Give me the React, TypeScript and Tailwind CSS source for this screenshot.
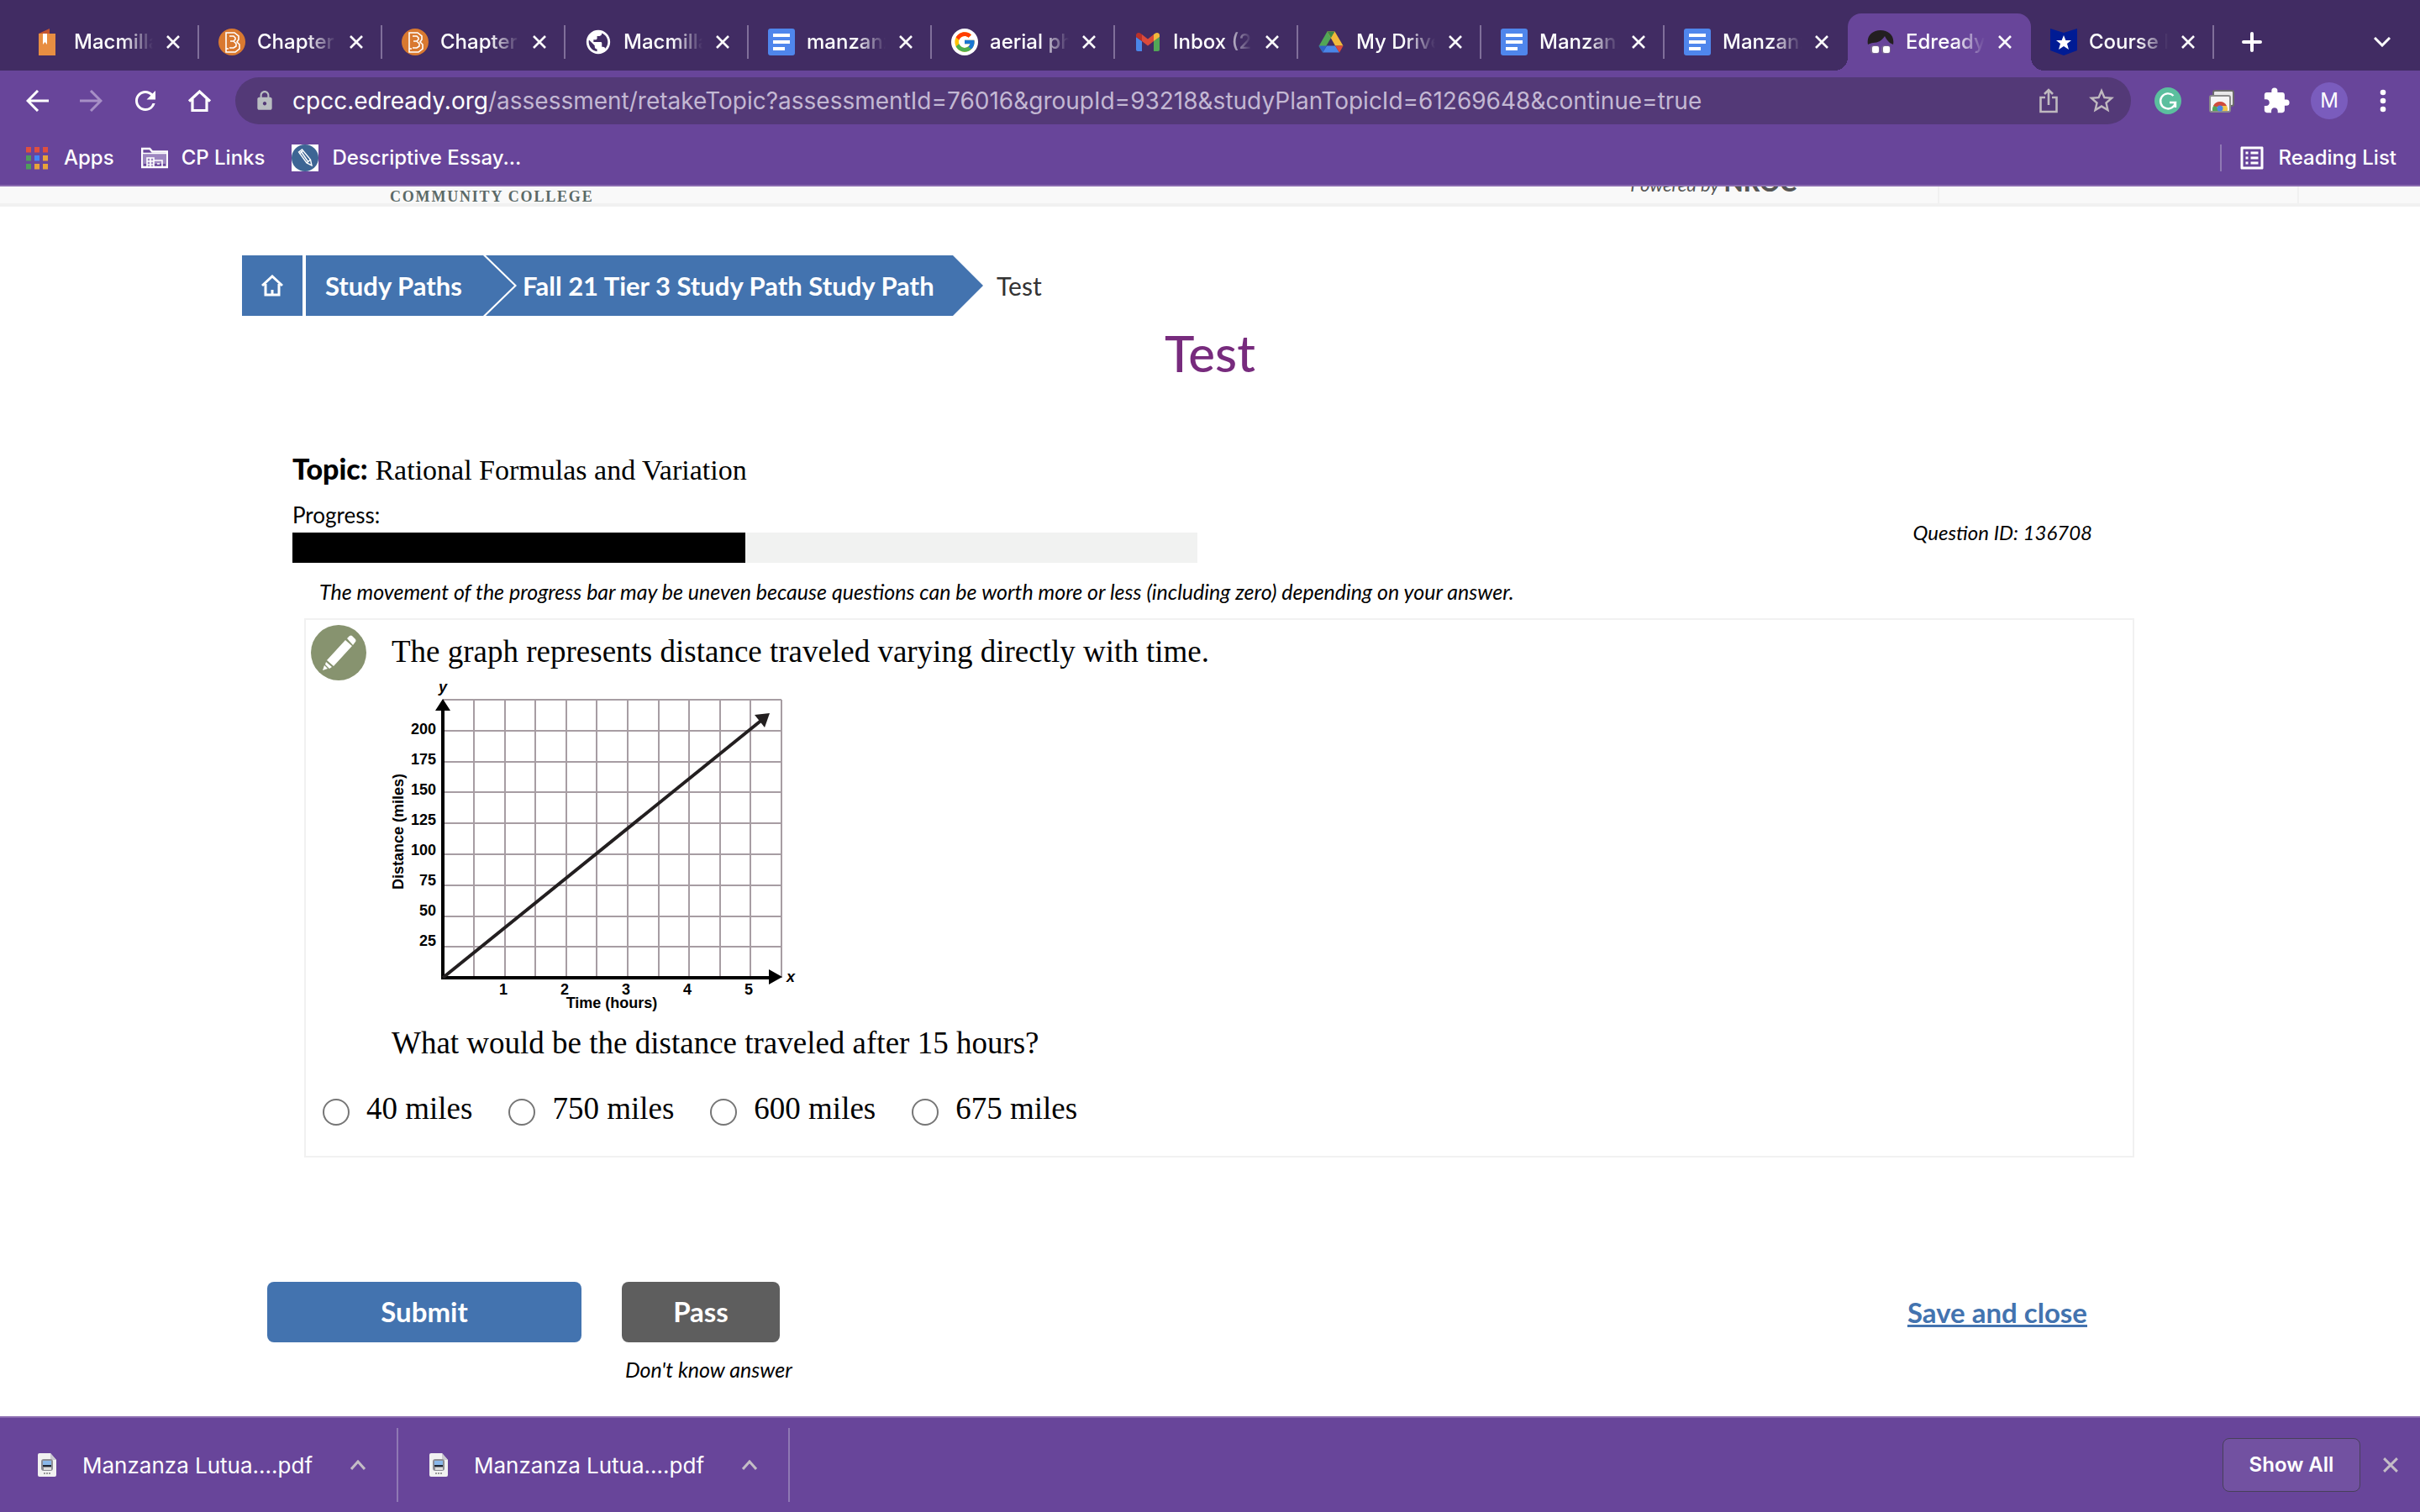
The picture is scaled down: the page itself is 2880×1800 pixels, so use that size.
import type { ReactNode } from 'react';
import { FcGoogle } from 'react-icons/fc';
import { MdExtension, MdListAlt, MdLock, MdPublic, MdRefresh, MdStarBorder } from 'react-icons/md';

function BookIcon() {
  return (
    <svg viewBox="0 0 32 32" className="size-8 shrink-0">
      <path d="M4 6 17 0v6z" fill="#c4552f" />
      <path d="M4 6h20v26H4z" fill="#e88e42" />
      <path d="M9 6h5v13l-2.500-3L9 19z" fill="#fff" />
    </svg>
  );
}

function BartlebyIcon() {
  return (
    <svg viewBox="0 0 32 32" className="size-8 shrink-0" fill="none" stroke="#fff" strokeWidth="1.600">
      <circle cx="16" cy="16" r="16" fill="#d97930" stroke="none" />
      <path d="M9 5h10l5 4v4l-2 3 3 3v5l-5 4H9z" />
      <path d="M13 9h5l2 2v2l-2 2h-4m4 0 3 3v3l-3 2h-5M9 24h3" />
    </svg>
  );
}

function DocsIcon() {
  return (
    <svg viewBox="0 0 32 32" className="size-8 shrink-0">
      <rect width="32" height="32" rx="3" fill="#4f86ec" />
      <path d="M6 6h20v4H6zM6 14h20v4H6zM6 22h14v4H6z" fill="#fff" />
    </svg>
  );
}

function GoogleIcon() {
  return (
    <span className="flex size-8 shrink-0 items-center justify-center rounded-full bg-white">
      <FcGoogle size={28} />
    </span>
  );
}

function GmailIcon() {
  return (
    <svg viewBox="0 0 32 32" className="size-8 shrink-0">
      <path d="M2 10v15c0 1.200.8 2 2 2h5V15z" fill="#4a86e8" />
      <path d="M23 15v12h5c1.200 0 2-.8 2-2V10z" fill="#52a657" />
      <path d="M23 7v8l7-5V8c0-2.600-2.800-4-5-2.500z" fill="#f1b93b" />
      <path d="M9 7v8l7 5.500 7-5.500V7l-7 5.500z" fill="#db4a3b" />
      <path d="M2 8v2l7 5V7L7 5.500C4.800 4 2 5.400 2 8z" fill="#b8312a" />
    </svg>
  );
}

function DriveIcon() {
  return (
    <svg viewBox="0 0 32 32" className="size-8 shrink-0">
      <path d="M11.500 3.500 1.500 21l4.500 7L16 11z" fill="#52a657" />
      <path d="M20.500 3.500h-9L21 20.500h9.500z" fill="#f1b93b" />
      <path d="M11.500 3.500h9L16 11z" fill="#3c8a45" />
      <path d="M11 20.500h10L26 28.500H6z" fill="#4a86e8" />
      <path d="M1.500 20.500H11L6 28.500z" fill="#2f62c9" />
      <path d="M21 20.500h9.500L26 28.500z" fill="#db4a3b" />
    </svg>
  );
}

function EdreadyIcon() {
  return (
    <svg viewBox="0 0 32 32" className="size-8 shrink-0">
      <path d="M1 19C-1 9 6 2 16 2s17 7 15 17l-4-2c-2-2-4-4-6-8-3 5-8 8-14 8-2 0-4 1-6 2z" fill="#231f20" />
      <rect x="4" y="20" width="11" height="10" rx="4" fill="#77658f" />
      <rect x="17" y="20" width="11" height="10" rx="4" fill="#77658f" />
      <rect x="6" y="21" width="8" height="8" rx="2" fill="#fff" />
      <rect x="19" y="21" width="8" height="8" rx="2" fill="#fff" />
    </svg>
  );
}

function CourseIcon() {
  return (
    <svg viewBox="0 0 32 32" className="size-8 shrink-0">
      <path d="m0 0 16 5L32 0v26l-16 6L0 26z" fill="#001b94" />
      <path d="m16 8 2.400 6H25l-5 4 2 7-6-4-6 4 2-7-5-4h6.600z" fill="#fff" />
    </svg>
  );
}

function CloseIcon({ className }: { className: string }) {
  return (
    <svg viewBox="0 0 16 16" className={className} fill="none" stroke="currentColor" strokeWidth="2.600">
      <path d="m1 1 14 14M15 1 1 15" />
    </svg>
  );
}

function PdfIcon() {
  return (
    <svg viewBox="0 0 22 28" className="h-7 w-[22px] shrink-0">
      <path d="M2 0h13l7 8v18a2 2 0 0 1-2 2H2a2 2 0 0 1-2-2V2a2 2 0 0 1 2-2z" fill="#f1f1f1" />
      <path d="M15 0v8h7z" fill="#c9c9cf" />
      <rect x="4" y="7" width="14" height="14" rx="3" fill="#8d8d95" />
      <path d="M6 9h10v5H6z" fill="#8ab8ea" />
      <path d="M6 14h10v2H6z" fill="#1f2733" />
      <path d="M7 17h9v3H7z" fill="#dcdcdc" />
      <path d="M7 24h8" stroke="#9a9a9a" strokeWidth="2" strokeDasharray="2 1" />
    </svg>
  );
}

type Tab = { title: string; icon: ReactNode; active?: boolean; noDivider?: boolean };

const tabs: Tab[] = [
  { title: 'Macmilla', icon: <BookIcon /> },
  { title: 'Chapter', icon: <BartlebyIcon /> },
  { title: 'Chapter', icon: <BartlebyIcon /> },
  { title: 'Macmilla', icon: <MdPublic size={34} className="-mx-px shrink-0" /> },
  { title: 'manzanz', icon: <DocsIcon /> },
  { title: 'aerial ph', icon: <GoogleIcon /> },
  { title: 'Inbox (2', icon: <GmailIcon /> },
  { title: 'My Drive', icon: <DriveIcon /> },
  { title: 'Manzanz', icon: <DocsIcon /> },
  { title: 'Manzanz', icon: <DocsIcon />, noDivider: true },
  { title: 'Edready', icon: <EdreadyIcon />, active: true, noDivider: true },
  { title: 'Course H', icon: <CourseIcon /> },
];

function TabStrip() {
  return (
    <div className="flex h-[84px] items-stretch bg-[#412c63] pl-[19px] pt-4 text-white">
      {tabs.map((tab, i) => (
        <div
          key={i}
          className={
            tab.active
              ? "relative flex w-[218px] items-center rounded-t-2xl bg-[#68459a] pl-[23px] before:absolute before:bottom-0 before:-left-4 before:size-4 before:bg-[radial-gradient(circle_at_0_0,transparent_16px,#68459a_16px)] before:content-[''] after:absolute after:bottom-0 after:-right-4 after:size-4 after:bg-[radial-gradient(circle_at_100%_0,transparent_16px,#68459a_16px)] after:content-['']"
              : 'flex w-[218px] items-center pl-[23px]'
          }
        >
          {tab.icon}
          <span className="ml-[14px] w-[94px] overflow-hidden whitespace-nowrap text-2xl font-medium [mask-image:linear-gradient(to_right,#000_62%,transparent)]">
            {tab.title}
          </span>
          <button aria-label="Close tab" className="ml-4">
            <CloseIcon className="size-4" />
          </button>
          {!tab.noDivider && <span className="ml-auto h-10 w-0.5 bg-[#806f9a]" />}
        </div>
      ))}
      <button aria-label="New tab" className="ml-[33px]">
        <svg viewBox="0 0 24 24" className="size-6" fill="none" stroke="currentColor" strokeWidth="4" strokeLinecap="round">
          <path d="M12 2v20M2 12h20" />
        </svg>
      </button>
      <button aria-label="Search tabs" className="ml-auto mr-[35px]">
        <svg viewBox="0 0 20 12" className="h-3 w-5" fill="none" stroke="currentColor" strokeWidth="3">
          <path d="m1 1 9 9 9-9" />
        </svg>
      </button>
    </div>
  );
}

function Toolbar() {
  return (
    <div className="flex h-[72px] items-center pl-[31px] pr-10 text-white">
      <div className="flex w-[249px] items-center gap-[37px]">
        <button aria-label="Back">
          <svg viewBox="0 0 27 26" className="h-[26px] w-[27px]" fill="none" stroke="currentColor" strokeWidth="3">
            <path d="M27 13H2M14 1 2 13l12 12" />
          </svg>
        </button>
        <button aria-label="Forward" className="text-[#a78fc6]">
          <svg viewBox="0 0 27 26" className="h-[26px] w-[27px]" fill="none" stroke="currentColor" strokeWidth="3">
            <path d="M0 13h25M13 1l12 12-12 12" />
          </svg>
        </button>
        <button aria-label="Reload" className="-mx-1">
          <MdRefresh size={36} />
        </button>
        <button aria-label="Home">
          <svg viewBox="0 0 27 26" className="h-[26px] w-[27px]" fill="none" stroke="currentColor" strokeWidth="3.200">
            <path d="M1 13.500 13.500 2 26 13.500M5 11v13.500h17V11" />
          </svg>
        </button>
      </div>
      <div className="flex h-14 flex-1 items-center rounded-full bg-[#533977] pl-[22px] pr-[17px]">
        <MdLock size={26} className="text-[#b9bdc1]" />
        <div role="textbox" aria-label="Address" className="ml-[20px] flex-1 whitespace-nowrap text-[28px] text-[#c3b8d3]">
          <span className="text-white">cpcc.edready.org</span>
          /assessment/retakeTopic?assessmentId=76016&amp;groupId=93218&amp;studyPlanTopicId=61269648&amp;continue=true
        </div>
        <button aria-label="Share" className="text-[#bfb9bf]">
          <svg viewBox="0 0 22 30" className="h-[30px] w-[22px]" fill="none" stroke="currentColor" strokeWidth="2.600">
            <path d="M7 11H1.500v17h19V11H15M11 20V2M6 7l5-5 5 5" />
          </svg>
        </button>
        <button aria-label="Bookmark this page" className="ml-[34px] text-[#bfb9bf]">
          <MdStarBorder size={36} />
        </button>
      </div>
      <div className="ml-7 flex items-center">
        <button aria-label="Grammarly" className="w-16">
          <svg viewBox="0 0 32 32" className="size-8" fill="none" stroke="#fff" strokeWidth="2.400">
            <circle cx="16" cy="16" r="16" fill="#5bbf9e" stroke="none" />
            <path d="M22.500 10A9 9 0 1 0 25 18h-7m7 0v6" />
          </svg>
        </button>
        <button aria-label="Screenshots" className="w-16">
          <svg viewBox="0 0 32 32" className="size-8">
            <rect x="6" y="4" width="24" height="18" rx="2" fill="#e8e8e8" stroke="#6b6b6b" strokeWidth="2" />
            <rect x="2" y="10" width="24" height="19" rx="2" fill="#f4f4f4" stroke="#8b8b8b" strokeWidth="2" />
            <path d="M5 28a9 9 0 0 1 3-8l6 8z" fill="#52a657" />
            <path d="M6 22a9 9 0 0 1 16 0l-8 2z" fill="#cf4b3c" />
            <path d="M14 22h8a9 9 0 0 1 1 6h-9z" fill="#f1c84b" />
            <circle cx="14" cy="25" r="3.500" fill="#4a86e8" />
          </svg>
        </button>
        <button aria-label="Extensions" className="w-[58px]">
          <MdExtension size={34} />
        </button>
        <button aria-label="Profile" className="size-11 rounded-full bg-[#7a5cbd] text-2xl">
          M
        </button>
        <button aria-label="Menu" className="ml-[38px]">
          <svg viewBox="0 0 8 28" className="h-7 w-2" fill="currentColor">
            <circle cx="4" cy="4" r="3.300" />
            <circle cx="4" cy="14" r="3.300" />
            <circle cx="4" cy="24" r="3.300" />
          </svg>
        </button>
      </div>
    </div>
  );
}

const appDots = ['#e04f3f', '#e04f3f', '#e04f3f', '#4f9d5b', '#4285f4', '#e8a33a', '#4f9d5b', '#e8a33a', '#e8a33a'];

function BookmarksBar() {
  return (
    <nav className="flex h-[66px] items-center border-b-2 border-[#8a6bb0] pl-[31px] pr-7 text-2xl font-medium text-white">
      <a href="#apps" className="flex items-center">
        <svg viewBox="0 0 27 27" className="size-[27px]">
          {appDots.map((fill, i) => (
            <rect key={i} x={(i % 3) * 10} y={Math.floor(i / 3) * 10} width="6" height="6.500" fill={fill} />
          ))}
        </svg>
        <span className="ml-[18px]">Apps</span>
      </a>
      <a href="#cp" className="ml-8 flex items-center">
        <svg viewBox="0 0 32 26" className="h-[26px] w-8" fill="none" stroke="currentColor" strokeWidth="2.400">
          <path d="M1.200 24V2h9l3 3.500h17.600V24z" />
          <path d="M2 8h28v12H2z" fill="#9d86c0" stroke="none" />
          <path d="M1.200 7.500h29.600" strokeWidth="1.500" />
          <path d="M7 24V13h8v11M11 13v11M7 17h8M7 21h8M15 16h10v8M19 20h3" strokeWidth="1.600" />
        </svg>
        <span className="ml-4">CP Links</span>
      </a>
      <a href="#essay" className="ml-8 flex items-center">
        <svg viewBox="0 0 32 32" className="size-8 bg-white" fill="none" stroke="#fff" strokeWidth="1.400">
          <circle cx="16" cy="16" r="16" fill="#3d6594" stroke="none" />
          <path d="m8.500 9 4-3 10 12 1.500 7-6-3z" />
          <path d="m11 8 9 13M18 22l4.500-4M9.500 11l4-3.500" />
        </svg>
        <span className="ml-4">Descriptive Essay...</span>
      </a>
      <span className="ml-auto h-8 w-0.5 bg-[#9079b4]" />
      <a href="#reading" className="ml-[18px] flex items-center">
        <MdListAlt size={36} />
        <span className="ml-[14px]">Reading List</span>
      </a>
    </nav>
  );
}

function Breadcrumb() {
  return (
    <nav className="flex h-[72px] items-stretch text-[31px] font-bold text-white">
      <a href="#home" aria-label="Home" className="mr-1 flex w-[72px] items-center justify-center bg-[#4373af]">
        <svg viewBox="0 0 26 26" className="size-[26px]" fill="none" stroke="currentColor" strokeWidth="3">
          <path d="M1 13 13 2l12 11M5 11v13h16V11M13 24v-6" />
        </svg>
      </a>
      <a
        href="#paths"
        className="flex w-[248px] items-center bg-[#4373af] pl-[23px] [clip-path:polygon(0_0,211px_0,100%_50%,211px_100%,0_100%)]"
      >
        Study Paths
      </a>
      <a
        href="#fall"
        className="-ml-[34px] flex w-[592px] items-center bg-[#4373af] pl-[44px] [clip-path:polygon(0_0,556px_0,100%_50%,556px_100%,0_100%,37px_50%)]"
      >
        Fall 21 Tier 3 Study Path Study Path
      </a>
      <span className="ml-4 flex items-center text-[30px] font-normal text-[#333]">Test</span>
    </nav>
  );
}

const yLabels = [200, 175, 150, 125, 100, 75, 50, 25];
const xLabels = [1, 2, 3, 4, 5];

function DistanceGraph() {
  return (
    <svg
      viewBox="466 812 484 396"
      className="mt-[14px] h-[396px] w-[484px] font-['Liberation_Sans',sans-serif] text-[18px] font-bold"
      role="img"
      aria-label="Distance in miles against time in hours"
    >
      <g stroke="#a79da3" strokeWidth="2">
        {Array.from({ length: 11 }, (_, i) => (
          <path key={i} d={`M${564 + Math.round(i * 36.6)} 833V1164`} />
        ))}
        {Array.from({ length: 9 }, (_, i) => (
          <path key={i} d={`M527 ${833 + Math.round(i * 36.8)}H930`} />
        ))}
      </g>
      <path d="M527 840v324h396" fill="none" stroke="#000" strokeWidth="4" />
      <path d="m527 832 9 14h-18zM931 1163l-16-9v18z" />
      <path d="M527 1164 908 856" fill="none" stroke="#231f20" strokeWidth="4" />
      <path d="m916 849-18 2 12 15z" fill="#231f20" />
      {yLabels.map((label, i) => (
        <text key={label} x="519" y={874 + i * 36} textAnchor="end">
          {label}
        </text>
      ))}
      {xLabels.map((label) => (
        <text key={label} x={526 + label * 73} y="1184" textAnchor="middle">
          {label}
        </text>
      ))}
      <text x="527" y="824" textAnchor="middle" fontStyle="italic">
        y
      </text>
      <text x="941" y="1169" textAnchor="middle" fontStyle="italic">
        x
      </text>
      <text x="728" y="1200" textAnchor="middle">
        Time (hours)
      </text>
      <text transform="translate(480 990) rotate(-90)" textAnchor="middle">
        Distance (miles)
      </text>
    </svg>
  );
}

const answers = ['40 miles', '750 miles', '600 miles', '675 miles'];

function QuestionCard() {
  return (
    <section className="ml-[74px] mr-[52px] mt-4 border-2 border-[#f1f1f1] pb-[34px] pl-1.5 pt-1.5 font-['Liberation_Serif',serif] text-[37px] leading-[44px]">
      <div className="flex">
        <svg viewBox="0 0 66 66" className="size-[66px] shrink-0">
          <circle cx="33" cy="33" r="33" fill="#87936f" />
          <path d="m41 18 8 7-22 24-8-7zM43 16l3-3q2-1 3 0l4 4q1 2 0 3l-3 4zM18 44l7 6-3 2-5-5zM16 48l4 4-6 2z" fill="#fff" />
        </svg>
        <div className="ml-[30px] pt-[10px]">
          <p>The graph represents distance traveled varying directly with time.</p>
          <DistanceGraph />
          <p className="mt-3">What would be the distance traveled after 15 hours?</p>
        </div>
      </div>
      <fieldset className="mt-[34px] flex gap-[43px] pl-[14px]">
        <legend className="sr-only">Distance after 15 hours</legend>
        {answers.map((answer) => (
          <label key={answer} className="flex items-center gap-5">
            <input
              type="radio"
              name="answer"
              value={answer}
              className="mt-2 size-8 appearance-none rounded-full border-2 border-[#767676] bg-white checked:border-[10px]"
            />
            {answer}
          </label>
        ))}
      </fieldset>
    </section>
  );
}

function DownloadItem({ name }: { name: string }) {
  return (
    <div className="flex items-center">
      <PdfIcon />
      <span className="ml-[31px] w-[270px] whitespace-nowrap text-[26px]">{name}</span>
      <button aria-label="Download options" className="ml-[49px] text-[#c4bdc6]">
        <svg viewBox="0 0 18 12" className="h-3 w-[18px]" fill="none" stroke="currentColor" strokeWidth="3">
          <path d="m1 11 8-9 8 9" />
        </svg>
      </button>
      <span className="ml-[37px] h-[88px] w-0.5 bg-[#8f78b4]" />
    </div>
  );
}

export default function App() {
  return (
    <div className="flex min-h-screen flex-col bg-white font-['Inter',sans-serif] text-black">
      <header className="bg-[#68459a]">
        <TabStrip />
        <Toolbar />
        <BookmarksBar />
      </header>

      <div className="flex h-6 items-start overflow-hidden border-b-4 border-[#f1f1f1] bg-[#f9f9f9] pl-[464px]">
        <span className="mt-0.5 whitespace-nowrap font-['Liberation_Serif',serif] text-lg font-bold leading-5 tracking-widest text-[#5b6967]">
          COMMUNITY COLLEGE
        </span>
        <span className="-mt-5 ml-auto mr-[168px] whitespace-nowrap font-['Lato',sans-serif] text-[22px] leading-7 text-[#555]">
          <em>Powered by</em> <strong className="text-[30px] font-black leading-7">NROC</strong>
        </span>
        <span className="h-full w-[430px] border-x-2 border-[#f1f1f1]" />
        <span className="w-[144px]" />
      </div>

      <main className="mx-[10%] flex-1 pt-[58px] font-['Lato',sans-serif]">
        <Breadcrumb />
        <h1 className="mt-2 text-center text-[60px] font-medium leading-[72px] text-[#772b7d]">Test</h1>

        <div className="ml-[60px] mr-[90px] mt-20">
          <p className="text-[34px] leading-[44px]">
            <strong className="font-black">Topic:</strong>{' '}
            <span className="font-['Liberation_Serif',serif]">Rational Formulas and Variation</span>
          </p>
          <div className="mt-[10px] flex items-end justify-between">
            <div className="w-1/2">
              <p className="text-[26px] leading-[42px]">Progress:</p>
              <div className="h-9 bg-[#f1f2f1]">
                <div className="h-full w-1/2 bg-black" />
              </div>
            </div>
            <em className="mb-5 mr-3 text-[24px] leading-8">Question ID: 136708</em>
          </div>
          <p className="ml-8 mt-[18px] text-[25px] italic leading-8">
            The movement of the progress bar may be uneven because questions can be worth more or less (including zero)
            depending on your answer.
          </p>
        </div>

        <QuestionCard />

        <div className="ml-[30px] mr-[108px] mt-[148px] flex items-start text-[33px] font-bold">
          <button className="h-[72px] w-[374px] rounded-lg bg-[#4373af] text-white">Submit</button>
          <div className="ml-12">
            <button className="block h-[72px] w-[188px] rounded-lg bg-[#5e5e5e] text-white">Pass</button>
            <p className="ml-1 mt-4 text-[25px] font-normal italic leading-8">Don't know answer</p>
          </div>
          <a href="#close" className="ml-auto leading-[72px] text-[#4373af] underline">
            Save and close
          </a>
        </div>
      </main>

      <footer className="flex h-[114px] items-center border-t-2 border-[#8a6bb0] bg-[#68459a] pl-[45px] pr-[26px] text-white">
        <DownloadItem name="Manzanza Lutua....pdf" />
        <div className="ml-[37px]">
          <DownloadItem name="Manzanza Lutua....pdf" />
        </div>
        <button className="ml-auto h-16 w-[164px] rounded-lg border border-[#47405a] bg-[#7251a1] text-2xl font-semibold">
          Show All
        </button>
        <button aria-label="Close downloads" className="ml-[27px] text-[#c4bdc6]">
          <CloseIcon className="size-[18px]" />
        </button>
      </footer>
    </div>
  );
}
